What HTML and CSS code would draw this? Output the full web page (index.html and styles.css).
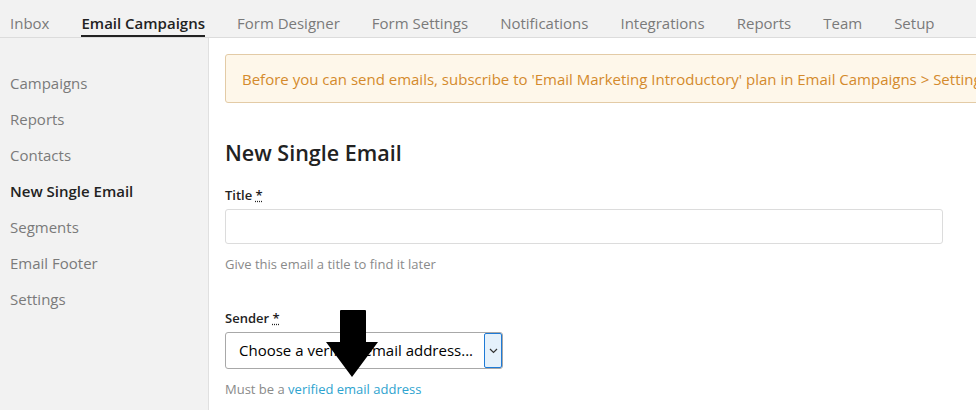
FILE: index.html
```html
<!DOCTYPE html>
<html>
<head>
<meta charset="utf-8">
<link rel="stylesheet" href="styles.css">
</head>
<body>
<nav class="tabs">
  <a class="tab">Inbox</a>
  <a class="tab active">Email Campaigns</a>
  <a class="tab">Form Designer</a>
  <a class="tab">Form Settings</a>
  <a class="tab">Notifications</a>
  <a class="tab">Integrations</a>
  <a class="tab">Reports</a>
  <a class="tab">Team</a>
  <a class="tab">Setup</a>
</nav>
<div class="layout">
  <aside class="sidebar">
    <a class="side-item">Campaigns</a>
    <a class="side-item">Reports</a>
    <a class="side-item">Contacts</a>
    <a class="side-item active">New Single Email</a>
    <a class="side-item">Segments</a>
    <a class="side-item">Email Footer</a>
    <a class="side-item">Settings</a>
  </aside>
  <main class="main">
    <div class="alert">Before you can send emails, subscribe to 'Email Marketing Introductory' plan in Email Campaigns &gt; Settings page.</div>
    <h1 class="heading">New Single Email</h1>
    <div class="field">
      <label class="label">Title <abbr class="req">*</abbr></label>
      <div class="input"></div>
      <div class="help">Give this email a title to find it later</div>
    </div>
    <div class="field field-sender">
      <label class="label">Sender <abbr class="req">*</abbr></label>
      <div class="select">
        <span class="select-text">Choose a verified email address...</span>
        <span class="select-btn">
          <svg width="9" height="6" viewBox="0 0 9 6"><path d="M1 1 L4.5 4.5 L8 1" fill="none" stroke="#333" stroke-width="1.2"/></svg>
        </span>
      </div>
      <div class="help">Must be a <a class="link">verified email address</a></div>
    </div>
  </main>
</div>
<svg class="arrow" width="54" height="70" viewBox="0 0 54 70">
  <path d="M14 1 Q14 0 15 0 L39 0 Q40 0 40 1 L40 32 L52 32 L26 67 L0 32 L14 32 Z" fill="#000"/>
</svg>
</body>
</html>
```
FILE: styles.css
```css
html, body {
  margin: 0;
  padding: 0;
  background: #fff;
  overflow: hidden;
  width: 976px;
  height: 410px;
  font-family: "Open Sans", "Noto Sans", sans-serif;
}
.tabs {
  display: flex;
  gap: 32px;
  height: 37px;
  padding-left: 10px;
  background: #f2f2f2;
  border-bottom: 1px solid #dcdcdc;
  box-sizing: content-box;
  align-items: stretch;
}
.tab {
  font-size: 15px;
  color: #7a7a7a;
  line-height: 20px;
  padding-top: 13px;
  box-sizing: border-box;
  white-space: nowrap;
}
.tab.active {
  color: #222;
  font-weight: 600;
  border-bottom: 2px solid #222;
}
.layout {
  display: grid;
  grid-template-columns: 209px 1fr;
  height: 372px;
}
.sidebar {
  background: #f2f2f2;
  border-right: 1px solid #e0e0e0;
  padding-top: 27px;
  display: flex;
  flex-direction: column;
}
.side-item {
  font-size: 15px;
  line-height: 36px;
  padding-left: 10px;
  color: #7a7a7a;
  white-space: nowrap;
}
.side-item.active {
  color: #222;
  font-weight: 600;
}
.main {
  padding: 16px 0 0 16px;
  min-width: 0;
}
.alert {
  width: 900px;
  background: #fef7ea;
  border: 1px solid #e3cba6;
  border-radius: 3px;
  color: #d48a2c;
  font-size: 15px;
  line-height: 19px;
  padding: 15px 16px 13px;
  white-space: nowrap;
}
.heading {
  margin: 36px 0 0;
  font-size: 21.5px;
  line-height: 28px;
  font-weight: 600;
  color: #222;
}
.field {
  margin-top: 18px;
}
.field-sender {
  margin-top: 34px;
}
.label {
  display: block;
  font-size: 13px;
  font-weight: 600;
  line-height: 20px;
  color: #222;
}
.req {
  text-decoration: underline dotted;
}
.input {
  margin-top: 4px;
  width: 718px;
  height: 35px;
  box-sizing: border-box;
  border: 1px solid #dcdcdc;
  border-radius: 3px;
}
.help {
  margin-top: 10px;
  font-size: 13px;
  line-height: 20px;
  color: #8a8a8a;
}
.link {
  color: #2ea3cf;
}
.select {
  margin-top: 4px;
  width: 278px;
  height: 37px;
  box-sizing: border-box;
  border: 1px solid #a8a8a8;
  border-radius: 3px;
  display: flex;
  align-items: stretch;
  justify-content: space-between;
}
.select-text {
  font-size: 15px;
  color: #000;
  line-height: 35px;
  padding-left: 13px;
  white-space: nowrap;
}
.select-btn {
  width: 16px;
  background: #e5f1fb;
  border: 1px solid #1e7ad6;
  border-radius: 2px;
  display: flex;
  align-items: center;
  justify-content: center;
}
.arrow {
  position: absolute;
  left: 326px;
  top: 310px;
}
```
